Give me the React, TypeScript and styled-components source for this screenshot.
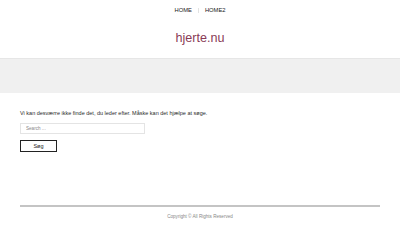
import React from 'react';
import styled, { createGlobalStyle } from 'styled-components';

const GlobalStyle = createGlobalStyle`
  html, body {
    margin: 0;
    padding: 0;
    background: #fff;
    font-family: 'Liberation Sans', Arial, sans-serif;
  }
`;

const Page = styled.div`
  width: 400px;
  height: 250px;
  display: flex;
  flex-direction: column;
  overflow: hidden;
`;

const Header = styled.header`
  display: flex;
  flex-direction: column;
  align-items: center;
  border-bottom: 1px solid #e6e6e6;
  height: 58px;
`;

const Nav = styled.nav`
  display: flex;
  align-items: center;
  gap: 6px;
  padding-top: 6px;
  height: 8px;
`;

const NavLink = styled.a`
  font-size: 5.8px;
  color: #222;
  text-transform: uppercase;
  text-decoration: none;
`;

const NavSep = styled.span`
  width: 1px;
  height: 5px;
  background: #e2e2e2;
`;

const SiteTitle = styled.h1`
  margin: 18px 0 0;
  font-size: 12.6px;
  font-weight: 400;
  color: #8a3b56;
  line-height: 1;
`;

const Band = styled.div`
  height: 34px;
  background: #f0f0f0;
`;

const Content = styled.main`
  padding: 16px 20px 0;
  display: flex;
  flex-direction: column;
  align-items: flex-start;
`;

const Notice = styled.p`
  margin: 0;
  font-size: 5.5px;
  color: #2a2a2a;
  line-height: 8px;
`;

const SearchInput = styled.input`
  box-sizing: border-box;
  margin-top: 6px;
  width: 125px;
  height: 11px;
  border: 1px solid #e4e4e4;
  padding: 0 5px;
  font-family: inherit;
  font-size: 4.6px;
  color: #555;
  outline: none;
  &::placeholder {
    color: #888;
  }
`;

const SubmitButton = styled.button`
  box-sizing: border-box;
  margin-top: 6px;
  width: 37px;
  height: 12px;
  background: #fff;
  border: 1px solid #222;
  padding: 0;
  font-family: inherit;
  font-size: 5.5px;
  color: #222;
`;

const Footer = styled.footer`
  margin: 53px 20px 0;
  border-top: 2px solid #c4c4c4;
  display: flex;
  justify-content: center;
  padding-top: 7px;
`;

const Copyright = styled.span`
  font-size: 4.6px;
  color: #888;
`;

export default function App() {
  return (
    <Page>
      <GlobalStyle />
      <Header>
        <Nav>
          <NavLink href="#">Home</NavLink>
          <NavSep />
          <NavLink href="#">Home2</NavLink>
        </Nav>
        <SiteTitle>hjerte.nu</SiteTitle>
      </Header>
      <Band />
      <Content>
        <Notice>Vi kan desværre ikke finde det, du leder efter. Måske kan det hjælpe at søge.</Notice>
        <SearchInput placeholder="Search ..." />
        <SubmitButton>Søg</SubmitButton>
      </Content>
      <Footer>
        <Copyright>Copyright © All Rights Reserved</Copyright>
      </Footer>
    </Page>
  );
}
